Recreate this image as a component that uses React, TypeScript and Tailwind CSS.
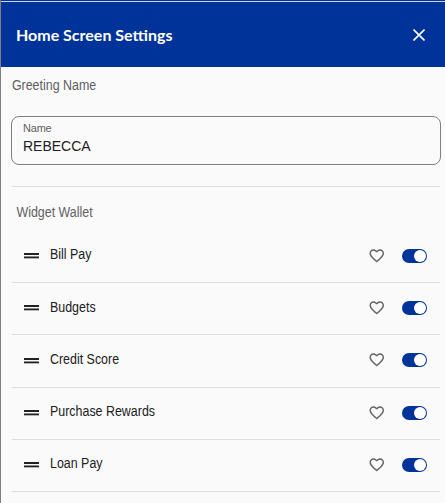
import React from 'react';

const widgets = ['Bill Pay', 'Budgets', 'Credit Score', 'Purchase Rewards', 'Loan Pay'];

const DragHandle = () => (
  <svg className="mt-[22.25px] h-1.5 w-[15px] shrink-0" viewBox="0 0 15 6" aria-hidden="true">
    <path d="M0 0h15v2H0z" fill="#222222" />
    <path d="M0 3h15v1H0z" fill="#888888" />
    <path d="M0 4h15v1H0z" fill="#222222" />
    <path d="M0 5h15v1H0z" fill="#b5b5b5" />
  </svg>
);

const Heart = () => (
  <svg className="mt-[16px] mr-[17px] h-[17.5px] w-[17.5px] shrink-0" viewBox="0 0 24 24" fill="#666666" aria-hidden="true">
    <path d="M16.5 3c-1.74 0-3.41.81-4.5 2.09C10.91 3.81 9.24 3 7.5 3 4.42 3 2 5.42 2 8.5c0 3.78 3.4 6.86 8.55 11.54L12 21.35l1.45-1.32C18.6 15.36 22 12.28 22 8.5 22 5.42 19.58 3 16.5 3zm-4.4 15.55l-.1.1-.1-.1C7.14 14.24 4 11.39 4 8.5 4 6.5 5.5 5 7.5 5c1.54 0 3.04.99 3.57 2.36h1.87C13.46 5.99 14.96 5 16.5 5c2 0 3.5 1.5 3.5 3.5 0 2.89-3.14 5.74-7.9 10.05z" />
  </svg>
);

const Toggle = () => (
  <button role="switch" aria-checked="true" className="mt-[18px] flex h-3.5 w-[25px] shrink-0 items-center justify-end rounded-full bg-[#003399] pr-px">
    <span className="h-3 w-3 rounded-full bg-white" />
  </button>
);

const App: React.FC = () => {
  return (
    <div className="h-[503px] w-[445px] overflow-hidden border-l border-[#7f7f7f] bg-[#fafafa] font-['Liberation_Sans',Arial,sans-serif]">
      <div className="h-0.5 border-b border-[#ccd6eb] bg-[#003399]" />
      <header className="flex h-[65px] items-center justify-between bg-[#003399] pr-5 pl-[15px] text-white">
        <h1 className="pt-px font-['Lato',sans-serif] text-[16px] font-bold">Home Screen Settings</h1>
        <button aria-label="Close">
          <svg className="h-3 w-3" viewBox="0 0 12 12" fill="none" stroke="currentColor" strokeWidth="1.6">
            <path d="M.5.5l11 11M11.5.5l-11 11" />
          </svg>
        </button>
      </header>

      <main className="pr-1 pl-[10px]">
        <h2 className="h-[49px] origin-left scale-x-[.888] pt-[10px] pl-px text-[14px] leading-4 text-[#616161]">Greeting Name</h2>
        <label className="block h-[49px] rounded-lg border border-[#808080] pt-[5px] pl-[11px]">
          <span className="block text-[11px] leading-[13px] tracking-[-.2px] text-[#616161]">Name</span>
          <input defaultValue="REBECCA" className="block h-[22px] w-[300px] text-[14px] text-[#212121] outline-none" />
        </label>

        <section className="mt-[21px] mr-px ml-px border-t border-[#dedede]">
          <h2 className="h-[43.75px] origin-left scale-x-[.888] pt-[17px] pl-[5px] text-[14px] leading-4 text-[#616161]">Widget Wallet</h2>
          <ul>
            {widgets.map(name => (
              <li key={name} className="flex h-[52.25px] items-start border-b border-[#dedede] pr-[13px] pl-3">
                <DragHandle />
                <span className="mt-[15.5px] ml-[10.5px] flex-1 origin-left scale-x-[.888] text-[14px] leading-4 text-[#212121]">{name}</span>
                <Heart />
                <Toggle />
              </li>
            ))}
          </ul>
        </section>
      </main>
    </div>
  );
};

export default App;
